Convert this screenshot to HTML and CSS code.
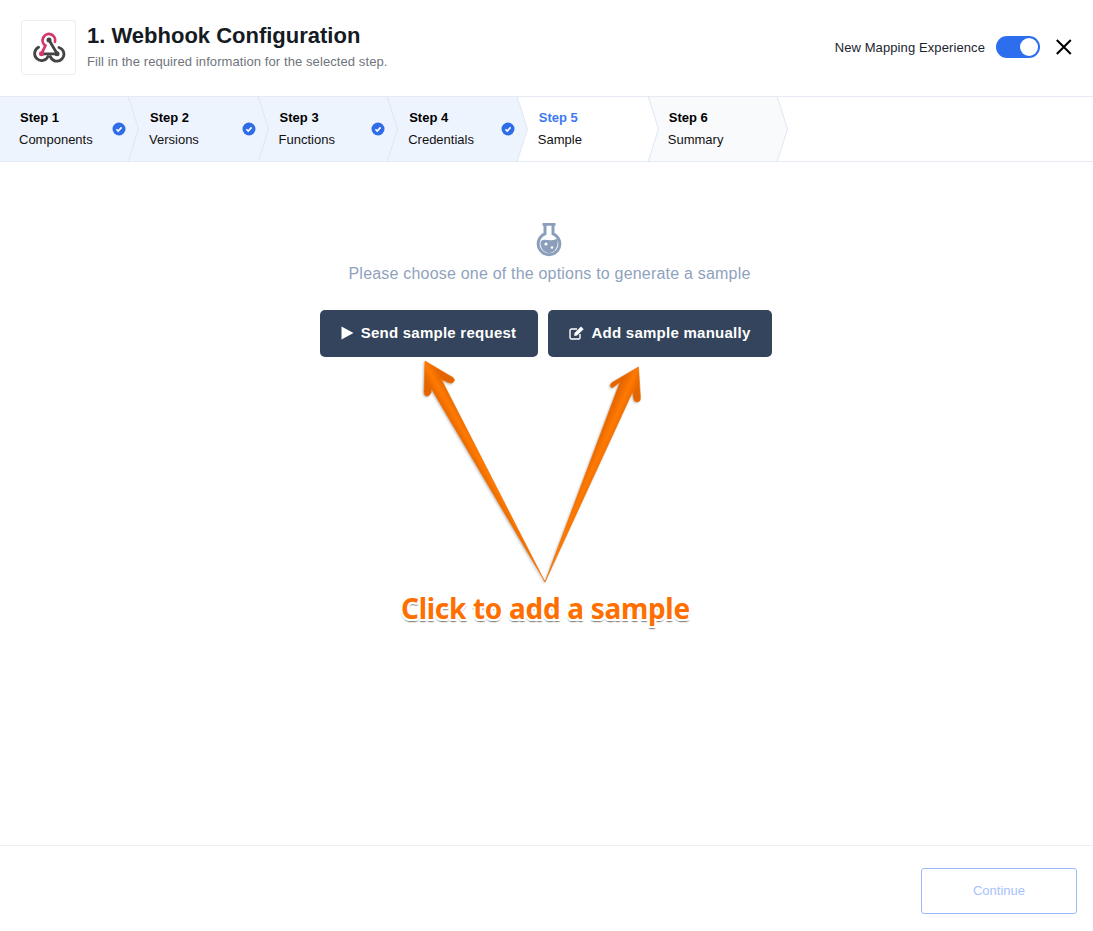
FILE: index.html
```html
<!DOCTYPE html>
<html>
<head>
    <title>Webhook Configuration</title>
    <link rel="stylesheet" href="styles.css">
</head>
<body>
    <div class="page">
        <header class="header">
            <div class="logo-box">
                <svg width="34" height="34" viewBox="31 31 34 34" fill="none" stroke-linecap="round">
                    <path d="M48 40 L56 53.5" stroke="#444" stroke-width="2.8"/>
                    <path d="M41 53.8 H56" stroke="#444" stroke-width="2.8"/>
                    <path d="M37.6 47.3 A7 7 0 1 0 47 56.5" stroke="#444" stroke-width="2.8"/>
                    <path d="M58 47.5 A7 7 0 1 1 49.3 56.5" stroke="#444" stroke-width="2.8"/>
                    <circle cx="48" cy="40" r="2.5" fill="#444"/>
                    <circle cx="56" cy="53.8" r="2.5" fill="#444"/>
                    <path d="M40.5 53.8 L44.4 45.6 A6.3 6.3 0 1 1 54 41.8" stroke="#d2386c" stroke-width="2.8"/>
                    <circle cx="40.5" cy="53.8" r="2.5" fill="#d2386c"/>
                </svg>
            </div>
            <div class="heading">
                <h1>1. Webhook Configuration</h1>
                <p>Fill in the required information for the selected step.</p>
            </div>
            <div class="header-actions">
                <span class="toggle-label">New Mapping Experience</span>
                <span class="toggle"><span class="toggle-knob"></span></span>
                <svg class="close-icon" width="16" height="16" viewBox="0 0 16 16" fill="none">
                    <path d="M0.8 1 L14.8 15 M14.8 1 L0.8 15" stroke="#000" stroke-width="2"/>
                </svg>
            </div>
        </header>

        <nav class="steps">
            <div class="step done">
                <div class="step-text"><b>Step 1</b><span>Components</span></div>
                <svg class="check" width="14" height="14" viewBox="0 0 14 14"><circle cx="7" cy="7" r="6.5" fill="#2f6ce8"/><path d="M4.4 7.2 L6.2 9 L9.6 5.4" fill="none" stroke="#fff" stroke-width="1.6"/></svg>
                <svg class="tip" width="11" height="66" viewBox="0 0 11 66"><path d="M0 0 L10.5 33 L0 66 Z" fill="#eef4fd"/><path d="M0 0 L10.5 33 L0 66" fill="none" stroke="#dfe6f3"/></svg>
            </div>
            <div class="step done">
                <div class="step-text"><b>Step 2</b><span>Versions</span></div>
                <svg class="check" width="14" height="14" viewBox="0 0 14 14"><circle cx="7" cy="7" r="6.5" fill="#2f6ce8"/><path d="M4.4 7.2 L6.2 9 L9.6 5.4" fill="none" stroke="#fff" stroke-width="1.6"/></svg>
                <svg class="tip" width="11" height="66" viewBox="0 0 11 66"><path d="M0 0 L10.5 33 L0 66 Z" fill="#eef4fd"/><path d="M0 0 L10.5 33 L0 66" fill="none" stroke="#dfe6f3"/></svg>
            </div>
            <div class="step done">
                <div class="step-text"><b>Step 3</b><span>Functions</span></div>
                <svg class="check" width="14" height="14" viewBox="0 0 14 14"><circle cx="7" cy="7" r="6.5" fill="#2f6ce8"/><path d="M4.4 7.2 L6.2 9 L9.6 5.4" fill="none" stroke="#fff" stroke-width="1.6"/></svg>
                <svg class="tip" width="11" height="66" viewBox="0 0 11 66"><path d="M0 0 L10.5 33 L0 66 Z" fill="#eef4fd"/><path d="M0 0 L10.5 33 L0 66" fill="none" stroke="#dfe6f3"/></svg>
            </div>
            <div class="step done">
                <div class="step-text"><b>Step 4</b><span>Credentials</span></div>
                <svg class="check" width="14" height="14" viewBox="0 0 14 14"><circle cx="7" cy="7" r="6.5" fill="#2f6ce8"/><path d="M4.4 7.2 L6.2 9 L9.6 5.4" fill="none" stroke="#fff" stroke-width="1.6"/></svg>
                <svg class="tip" width="11" height="66" viewBox="0 0 11 66"><path d="M0 0 L10.5 33 L0 66 Z" fill="#eef4fd"/><path d="M0 0 L10.5 33 L0 66" fill="none" stroke="#dfe6f3"/></svg>
            </div>
            <div class="step current">
                <div class="step-text"><b>Step 5</b><span>Sample</span></div>
                <svg class="tip" width="11" height="66" viewBox="0 0 11 66"><path d="M0 0 L10.5 33 L0 66 Z" fill="#fff"/><path d="M0 0 L10.5 33 L0 66" fill="none" stroke="#dfe6f3"/></svg>
            </div>
            <div class="step todo">
                <div class="step-text"><b>Step 6</b><span>Summary</span></div>
                <svg class="tip" width="11" height="66" viewBox="0 0 11 66"><path d="M0 0 L10.5 33 L0 66 Z" fill="#f9fafb"/><path d="M0 0 L10.5 33 L0 66" fill="none" stroke="#dfe6f3"/></svg>
            </div>
        </nav>

        <main class="content">
            <svg class="flask" width="26" height="34" viewBox="0 0 26 34">
                <path d="M6.5 1.3 H19.5 M9 1.5 V10.8 A10.8 10.8 0 1 0 17 10.8 V1.5" fill="none" stroke="#8b9fbb" stroke-width="3"/>
                <path d="M4.5 19 C8 14 12 20 21.5 15.5 C23 23 19 30 13 30 C7.5 30 4 24 4.5 19 Z" fill="#8b9fbb"/>
                <circle cx="10" cy="21" r="1.6" fill="#fff"/>
                <circle cx="16" cy="24.5" r="1.3" fill="#fff"/>
            </svg>
            <p class="hint">Please choose one of the options to generate a sample</p>
            <div class="actions">
                <button class="btn btn-send">
                    <svg width="13" height="14" viewBox="0 0 13 14"><path d="M0.5 0.5 L12.5 7 L0.5 13.5 Z" fill="#fff"/></svg>
                    Send sample request
                </button>
                <button class="btn btn-add">
                    <svg width="16" height="14" viewBox="0 0 16 14" fill="none">
                        <path d="M11 8 V11.5 A1.5 1.5 0 0 1 9.5 13 H2.5 A1.5 1.5 0 0 1 1 11.5 V4.5 A1.5 1.5 0 0 1 2.5 3 H8" stroke="#fff" stroke-width="1.4"/>
                        <path d="M5.5 7 L12 0.6 L14.6 3.2 L8 9.6 L5.2 10 Z" fill="#fff"/>
                    </svg>
                    Add sample manually
                </button>
            </div>
        </main>

        <footer class="footer">
            <button class="btn-continue" disabled>Continue</button>
        </footer>

        <svg class="arrows" width="1093" height="931" viewBox="0 0 1093 931">
            <defs>
                <linearGradient id="arrowLeft" gradientUnits="userSpaceOnUse" x1="432" y1="392" x2="446" y2="384">
                    <stop offset="0" stop-color="#e46500"/>
                    <stop offset="0.5" stop-color="#ff7a00"/>
                    <stop offset="1" stop-color="#e46500"/>
                </linearGradient>
                <linearGradient id="arrowRight" gradientUnits="userSpaceOnUse" x1="618" y1="390" x2="634" y2="397">
                    <stop offset="0" stop-color="#e46500"/>
                    <stop offset="0.5" stop-color="#ff7a00"/>
                    <stop offset="1" stop-color="#e46500"/>
                </linearGradient>
            </defs>
            <path class="arrow" fill="url(#arrowLeft)" stroke="#f07000" stroke-width="0.6" d="M425 361 L453 377.5 Q456 380 453 382.5 Q451 384 447 382 L441.5 379.5 L545 582 L431.5 389 L431 393 Q429 397 426 396 Q424 395 424 392 Z"/>
            <path class="arrow" fill="url(#arrowRight)" stroke="#f07000" stroke-width="0.6" d="M638.5 367 L640.5 398 Q640.5 402 637 402 Q634 402 633.5 398 L632.5 392 L545 582 L620 382 L615 386 Q612 389 610.5 386.5 Q609.5 384.5 612 382.5 Z"/>
        </svg>
        <div class="callout">Click to add a sample</div>
    </div>
</body>
</html>
```

FILE: styles.css
```css
body {
    font-family: "Liberation Sans", Arial, sans-serif;
    background-color: #fff;
    margin: 0;
    padding: 0;
}

.page {
    position: relative;
    display: flex;
    flex-direction: column;
    height: 931px;
    overflow: hidden;
}

.header {
    display: flex;
    align-items: center;
    height: 96px;
    padding: 0 21px;
    box-sizing: border-box;
}

.logo-box {
    display: flex;
    align-items: center;
    justify-content: center;
    width: 55px;
    height: 55px;
    box-sizing: border-box;
    margin-top: -1px;
    border: 1px solid #eeeeee;
    border-radius: 3px;
}

.heading {
    margin-left: 11px;
    margin-top: -5px;
}

.heading h1 {
    margin: 0;
    font-size: 22px;
    line-height: 28px;
    color: #151a23;
}

.heading p {
    margin: 4px 0 0;
    font-size: 13px;
    line-height: 16px;
    letter-spacing: 0.09px;
    color: #6f747c;
}

.header-actions {
    display: flex;
    align-items: center;
    margin-left: auto;
    margin-top: -2px;
}

.toggle-label {
    font-size: 13px;
    letter-spacing: 0.1px;
    color: #1b2430;
}

.toggle {
    display: flex;
    align-items: center;
    justify-content: flex-end;
    width: 44px;
    height: 22px;
    box-sizing: border-box;
    padding-right: 2px;
    margin-left: 11px;
    border-radius: 11px;
    background-color: #2d6eef;
}

.toggle-knob {
    width: 18px;
    height: 18px;
    border-radius: 50%;
    background-color: #fff;
}

.close-icon {
    margin-left: 16px;
}

.steps {
    display: flex;
    height: 66px;
    box-sizing: border-box;
    border-top: 1px solid #e6ebf3;
    border-bottom: 1px solid #e6ebf3;
}

.step {
    position: relative;
    display: flex;
    align-items: center;
    justify-content: space-between;
    width: 129.6px;
    box-sizing: border-box;
    padding: 0 2px 0 21px;
}

.step:first-child {
    width: 128px;
    padding-left: 19px;
}

.step.done {
    background-color: #eef4fd;
}

.step.current {
    width: 131px;
    background-color: #fff;
}

.step.todo {
    padding-left: 20px;
    background-color: #f9fafb;
}

.step-text {
    display: flex;
    flex-direction: column;
    gap: 6px;
    margin-top: -1px;
    font-size: 13px;
    line-height: 16px;
    color: #111;
}

.step-text b {
    padding-left: 1px;
    color: #000;
}

.step.current .step-text b {
    color: #3d78f2;
}

.check {
    flex: none;
}

.tip {
    position: absolute;
    top: -1px;
    left: 100%;
    z-index: 1;
}

.content {
    flex: 1;
    display: flex;
    flex-direction: column;
    align-items: center;
    padding-top: 61px;
    box-sizing: border-box;
}

.flask {
    margin-left: 5px;
}

.hint {
    margin: 6px 0 0 6px;
    font-size: 16px;
    line-height: 22px;
    letter-spacing: 0.2px;
    color: #8fa2bd;
}

.actions {
    display: flex;
    gap: 10px;
    margin-top: 25px;
    margin-left: -2px;
}

.btn {
    display: flex;
    align-items: center;
    gap: 7px;
    justify-content: center;
    height: 47px;
    padding: 0 0 2px;
    border: none;
    border-radius: 5px;
    background-color: #33445c;
    color: #fff;
    font-family: "Liberation Sans", Arial, sans-serif;
    font-size: 15px;
    font-weight: bold;
    letter-spacing: 0.25px;
}

.btn-send {
    width: 218px;
}

.btn-add {
    width: 224px;
}

.footer {
    display: flex;
    justify-content: flex-end;
    height: 86px;
    box-sizing: border-box;
    padding: 22px 16px 0 0;
    border-top: 1px solid #eeeeee;
}

.btn-continue {
    width: 156px;
    height: 46px;
    padding: 0 0 2px;
    border: 1px solid #9bbafb;
    border-radius: 3px;
    background-color: #fff;
    color: #a6c2fc;
    font-family: "Liberation Sans", Arial, sans-serif;
    font-size: 13px;
}

/* annotation drawn on top of the screenshot */
.arrows {
    position: absolute;
    top: 0;
    left: 0;
    pointer-events: none;
}

.arrow {
    filter: drop-shadow(-1px 1px 1px rgba(0, 0, 0, 0.25));
}

.callout {
    position: absolute;
    top: 588px;
    left: 401px;
    font-family: "Noto Sans", "Open Sans", sans-serif;
    font-size: 28px;
    font-weight: bold;
    line-height: 40px;
    letter-spacing: -0.3px;
    white-space: nowrap;
    color: #ff6f00;
    text-shadow: 2px 0 0 #fff, -2px 0 0 #fff, 0 -2px 0 #fff, 0 2px 0 #fff, -1.5px 1.5px 0 #fff, 1.5px 1.5px 0 #fff, -1.5px -1.5px 0 #fff, 1.5px -1.5px 0 #fff, 0 3px 1px #8a8a8a, 1px 3px 1px #aaa, -1px 3px 1px #aaa;
}
```
